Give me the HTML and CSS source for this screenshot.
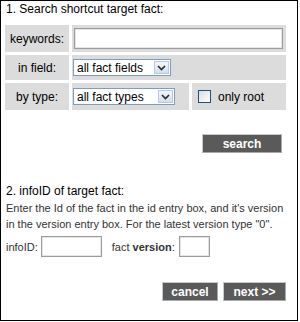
FILE: index.html
```html
<!DOCTYPE html>
<html>
<head>
<meta charset="utf-8">
<link rel="stylesheet" href="styles.css">
</head>
<body>
<div class="panel">
  <div class="step step-one">1. Search shortcut target fact:</div>
  <div class="grid">
    <div class="label">keywords:</div>
    <div class="cell span2"><input class="field kw" type="text"></div>
    <div class="label">in field:</div>
    <div class="cell span2">
      <div class="select sel-fields"><span class="sel-text">all fact fields</span><span class="arrow"><svg width="9" height="6" viewBox="0 0 9 6"><path d="M1 1 L4.5 4.5 L8 1" fill="none" stroke="#2a2a2a" stroke-width="1.6"/></svg></span></div>
    </div>
    <div class="label">by type:</div>
    <div class="cell">
      <div class="select sel-types"><span class="sel-text">all fact types</span><span class="arrow"><svg width="9" height="6" viewBox="0 0 9 6"><path d="M1 1 L4.5 4.5 L8 1" fill="none" stroke="#2a2a2a" stroke-width="1.6"/></svg></span></div>
    </div>
    <div class="cell check-cell"><span class="check"></span><span>only root</span></div>
  </div>
  <div class="actions search-row"><button class="btn btn-search">search</button></div>
  <div class="step step-two">2. infoID of target fact:</div>
  <p class="note">Enter the Id of the fact in the id entry box, and it's version in the version entry box. For the latest version type "0".</p>
  <div class="idrow">
    <span>infoID:</span><input class="field info" type="text">
    <span class="ver-label">fact <b class="ver">version</b>:</span><input class="field version" type="text">
  </div>
  <div class="actions nav-row"><button class="btn btn-cancel">cancel</button><button class="btn btn-next">next &gt;&gt;</button></div>
</div>
</body>
</html>
```
FILE: styles.css
```css
html, body { margin: 0; padding: 0; background: #fff; }
body { font-family: "Liberation Sans", Arial, sans-serif; font-size: 12px; color: #000; }
.panel { width: 296px; height: 319px; border: 1px solid #000; }
.step { font-size: 12px; line-height: 15px; padding: 0 5px; }
.step-one { padding-top: 1px; }
.grid { display: grid; grid-template-columns: 64px 117px 94px; grid-template-rows: 27px 25px 27px; gap: 3px; margin: 8px 0 0 4px; }
.label { background: #dcdcdc; display: flex; align-items: center; justify-content: center; }
.cell { background: #dcdcdc; display: flex; align-items: center; padding-left: 2px; }
.span2 { grid-column: span 2; }
.field { box-sizing: border-box; height: 21px; border: 1px solid #9c9c9c; box-shadow: inset 0 0 0 1px #e4e4e4; background: #fff; padding: 0; margin: 0; font: inherit; outline: none; }
.kw { width: 209px; }
.select { box-sizing: border-box; height: 17px; border: 1px solid #7f9db9; background: #fff; display: flex; align-items: center; margin-left: -1px; }
.sel-fields { width: 98px; }
.sel-types { width: 102px; }
.sel-text { flex: 1; padding-left: 3px; white-space: nowrap; }
.arrow { width: 15px; height: 13px; margin-right: 1px; box-sizing: border-box; border: 1px solid #b9c9e2; background: linear-gradient(#f4f6fb, #d5ddee); display: flex; align-items: center; justify-content: center; }
.arrow svg { display: block; }
.check-cell { padding-left: 6px; gap: 7px; }
.check { width: 13px; height: 13px; box-sizing: border-box; border: 1px solid #1c5180; background: linear-gradient(135deg, #dcdcd7, #fff); }
.actions { display: flex; justify-content: flex-end; }
.search-row { margin-top: 24px; padding-right: 15px; }
.nav-row { margin-top: 25px; padding-right: 11px; gap: 5px; }
.btn { box-sizing: border-box; height: 19px; background: #5a5a5a; color: #fff; font: bold 12px "Liberation Sans", Arial, sans-serif; border: 1px solid; border-color: #c8c8c8 #aaaaaa #aaaaaa #c8c8c8; padding: 0; margin: 0; }
.btn-search { width: 80px; }
.btn-cancel { width: 56px; }
.btn-next { width: 63px; }
.step-two { margin-top: 31px; }
.note { margin: 1px 0 0; padding: 0 5px; font-size: 11px; line-height: 16px; color: #333; }
.idrow { display: flex; align-items: center; margin-top: 4px; padding-left: 5px; font-size: 11px; color: #333; }
.info { width: 61px; margin-left: 3px; }
.ver-label { margin-left: 10px; }
.ver { font-weight: bold; color: #333; }
.version { width: 31px; margin-left: 4px; }
```
